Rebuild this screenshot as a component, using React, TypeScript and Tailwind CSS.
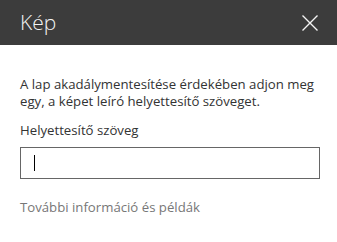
const CloseIcon = () => (
  <svg width="16" height="16" viewBox="0 0 16 16" fill="none" stroke="#f4f4f4" strokeWidth="1.4">
    <path d="M0.5 0.5 L15.5 15.5 M15.5 0.5 L0.5 15.5" />
  </svg>
);

const App = () => {
  return (
    <div className="w-[337px] h-[242px] bg-white font-['Open_Sans',sans-serif] overflow-hidden">
      <div className="h-[45px] bg-[#3c3c3c] flex items-center justify-between pl-[20px] pr-[19px]">
        <h1 className="text-[21px] font-light text-[#f4f4f4] leading-none">Kép</h1>
        <CloseIcon />
      </div>
      <div className="px-[20px] pt-[31px]">
        <p className="text-[13.2px] leading-[17px] text-[#333]">
          A lap akadálymentesítése érdekében adjon meg egy, a képet leíró helyettesítő szöveget.
        </p>
        <label className="block mt-[12px] text-[13.2px] leading-[17px] text-[#333]">Helyettesítő szöveg</label>
        <div className="mt-[8px] h-[32px] w-[300px] border border-[#666] flex items-center pl-[13px]">
          <span className="w-px h-[16px] bg-black" />
        </div>
        <a href="#" className="block mt-[20px] text-[13.2px] leading-[17px] text-[#777]">
          További információ és példák
        </a>
      </div>
    </div>
  );
};

export default App;
